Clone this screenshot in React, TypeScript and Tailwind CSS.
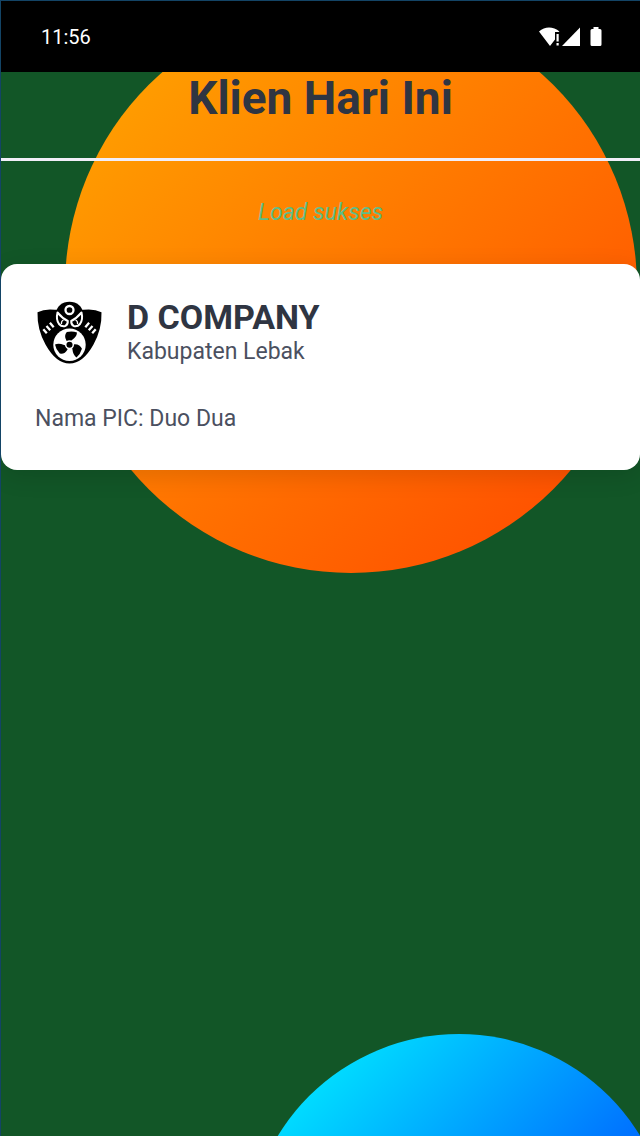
import React from "react";

function StatusIcons() {
  return (
    <svg width="66" height="24" viewBox="0 0 66 24" fill="#fff" role="img" aria-label="Wi-Fi, signal, battery">
      <path d="M1 6.500C4 3.800 7.500 2.500 11 2.500s7.500 1.300 10.500 4L20.500 7H17v7.500L12 21Z" />
      <path d="M18.500 9h2.200v7.500h-2.200zM18.500 18h2.200v2.500h-2.200z" />
      <path d="M42 2.500V21H24Z" />
      <path d="M55.500 2h5v2H62q1.500 0 1.500 1.500v14q0 1.500-1.500 1.500h-8q-1.500 0-1.500-1.500v-14Q52.500 4 54 4h1.500Z" />
    </svg>
  );
}

const blade = "M31.800 33Q37 31.600 42 33.400Q41.800 37.500 37 41L34.500 43.500L31.500 41.800Q28.500 37 31.800 33Z";

function CompanyLogo() {
  return (
    <svg className="size-17 shrink-0" viewBox="0 0 68 68" role="img" aria-label="D Company">
      <path
        d="M2.500 13.200Q10 9.500 20 10.800H48.500Q59 9.500 66.500 13.200Q67 30 58.500 45.500Q48 64.500 34.500 64.500T10.500 45.500Q2 30 2.500 13.200Z"
        fill="#000"
      />
      <ellipse cx="34.500" cy="14" rx="13.300" ry="11.300" fill="#000" />
      <g fill="#000" stroke="#fff" strokeWidth="2" strokeLinejoin="round">
        <path d="M22.500 13.500Q20.800 20.500 24 25Q26.500 28 30.300 27Q33 25.500 32.800 22Q27.500 19.500 22.500 13.500Z" />
        <path d="M46.500 13.500Q48.200 20.500 45 25Q42.500 28 38.700 27Q36 25.500 36.200 22Q41.500 19.500 46.500 13.500Z" />
      </g>
      <path
        d="M26.500 25Q26 21.800 28.500 21M42.500 25Q43 21.800 40.500 21"
        fill="none"
        stroke="#fff"
        strokeWidth="1.200"
      />
      <circle cx="34.500" cy="11" r="4" fill="none" stroke="#fff" strokeWidth="2.300" />
      <path
        d="M8.300 30.200L11.800 34.200M11.500 27L15.200 31.200M14.900 23.800L18.700 28.200M60.700 30.200L57.200 34.200M57.500 27L53.800 31.200M54.100 23.800L50.300 28.200"
        stroke="#fff"
        strokeWidth="2.300"
      />
      <circle cx="34.500" cy="45.800" r="16.200" fill="#fff" />
      <g fill="#000">
        <path d={blade} />
        <path d={blade} transform="rotate(120 34.500 45.800)" />
        <path d={blade} transform="rotate(240 34.500 45.800)" />
      </g>
      <circle cx="34.500" cy="45.800" r="3.800" fill="#000" stroke="#fff" strokeWidth="1.500" />
    </svg>
  );
}

export default function App() {
  return (
    <div className="relative isolate min-h-screen overflow-hidden border-t border-l border-[#134466] bg-[#125627] font-['Roboto',sans-serif] text-[#2f3542]">
      <div className="absolute top-0 left-16 -z-10 size-[572px] rounded-full bg-linear-135/srgb from-[#ffaa00] to-[#ff4500]" />
      <div className="absolute -right-[31px] -bottom-[322px] -z-10 size-[424px] rounded-full bg-linear-135/srgb from-[#00ffff] to-[#0009ff]" />

      <header className="flex h-[71px] items-center justify-between bg-black pr-9 pl-10 text-white">
        <time className="text-xl">11:56</time>
        <StatusIcons />
      </header>

      <main>
        <h1 className="border-b-3 border-[#f1eef8] pb-[34px] text-center text-[46px] leading-[52px] font-bold">
          Klien Hari Ini
        </h1>
        <p className="py-9 text-center text-[23px] leading-[31px] text-[#5fbd88] italic">Load sukses</p>

        <article className="rounded-2xl bg-white px-[34px] pt-[34px] pb-9 shadow-[0_6px_24px_rgba(0,0,0,0.12)]">
          <div className="flex items-center gap-6">
            <CompanyLogo />
            <div>
              <h2 className="text-[34px] leading-[38px] font-bold">D COMPANY</h2>
              <p className="text-[23px] leading-8 text-[#4b5060]">Kabupaten Lebak</p>
            </div>
          </div>
          <p className="mt-9 text-[23px] leading-[30px] text-[#4b5060]">Nama PIC: Duo Dua</p>
        </article>
      </main>
    </div>
  );
}
